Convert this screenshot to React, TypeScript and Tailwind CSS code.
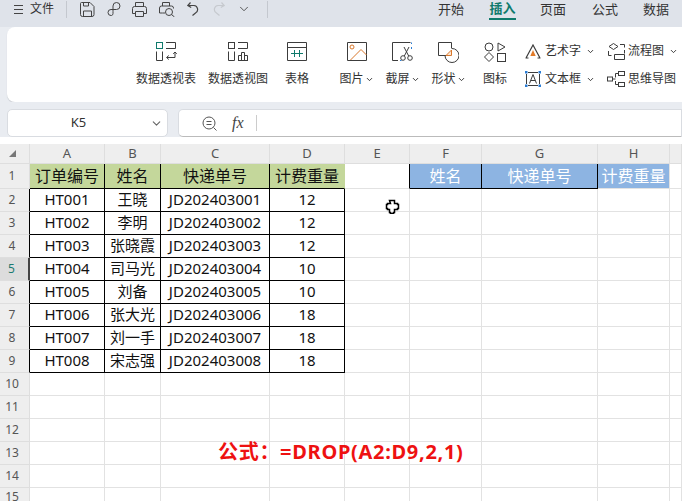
import { ChevronDown } from "lucide-react";

const COLS = ["A", "B", "C", "D", "E", "F", "G", "H", ""];

const ORDERS = [
  ["HT001", "王晓", "JD202403001", "12"],
  ["HT002", "李明", "JD202403002", "12"],
  ["HT003", "张晓霞", "JD202403003", "12"],
  ["HT004", "司马光", "JD202403004", "10"],
  ["HT005", "刘备", "JD202403005", "10"],
  ["HT006", "张大光", "JD202403006", "18"],
  ["HT007", "刘一手", "JD202403007", "18"],
  ["HT008", "宋志强", "JD202403008", "18"],
];

const RowHead = ({ n, edge }: { n: number; edge?: boolean }) => {
  const active = n === 5;
  return (
    <div
      className={`flex items-center justify-center pr-[5px] text-[12px] border-b border-b-[#dedede] ${
        active ? "bg-[#dcdcdc] text-[#1b7a70] border-r-2 border-r-[#444444]" : "bg-[#eeeeee] text-[#555555] border-r"
      } ${!active && edge ? "border-r-black" : ""} ${!active && !edge ? "border-r-[#dedede]" : ""}`}
    >
      {n}
    </div>
  );
};

const Cell = ({ className, children }: { className?: string; children?: React.ReactNode }) => (
  <div className={`flex items-center justify-center whitespace-nowrap border-r border-b ${className ?? "border-[#e2e2e2]"}`}>
    {children}
  </div>
);

const IconPivot = ({ chart }: { chart?: boolean }) => (
  <svg width="21" height="19" viewBox="0 0 21 19" fill="none" stroke="#3c3c3c">
    <rect x="0.5" y="0.5" width="6" height="6" stroke={chart ? "#3c3c3c" : "#0f7a6c"} />
    <path d="M10 .5h9.500v6H10M.5 9.500v9h6v-9" />
    {chart ? (
      <path d="M10.500 18.500v-5h3v5M13.500 18.500v-8h3v8M16.500 18.500v-5h3v5M10 18.500h10" />
    ) : (
      <path d="M19 14v-3.500M17.200 11.800 19 10l1.800 1.800M19 14v1.500h-8M12.800 13.500 10.500 15.500l2.300 2" />
    )}
  </svg>
);

const IconTable = () => (
  <svg width="20" height="19" viewBox="0 0 20 19" fill="none">
    <path d="M.5.500h19v18H.5zM.5 5.500h19" stroke="#3c3c3c" />
    <path d="M4 11.500h12M7.500 8v7M12.500 8v7" stroke="#0f7a6c" />
  </svg>
);

const IconPicture = () => (
  <svg width="20" height="19" viewBox="0 0 20 19" fill="none">
    <path d="M.5.500h19v18H.5z" stroke="#3c3c3c" />
    <circle cx="5" cy="5" r="2" stroke="#d9772b" />
    <path d="M3.500 18 14 7.500l5.500 5.500" stroke="#d9772b" />
  </svg>
);

const IconScreenshot = () => (
  <svg width="21" height="19" viewBox="0 0 21 19" fill="none">
    <path d="M6 18.500H.5V.500h18" stroke="#3c3c3c" />
    <path d="M19.500.500v1.500M19.500 5v2M8 18.500h1.500" stroke="#2b7cd3" />
    <circle cx="11" cy="16" r="2.300" stroke="#3c3c3c" />
    <circle cx="18" cy="16" r="2.300" stroke="#3c3c3c" />
    <path d="M12.300 14 17 5M16.700 14 12 5" stroke="#3c3c3c" />
  </svg>
);

const IconShape = () => (
  <svg width="21" height="21" viewBox="0 0 21 21" fill="none">
    <path d="M9 13.500H.5V.500h13v6" stroke="#3c3c3c" />
    <path d="M14 6.500a7 7 0 1 1-7 7" stroke="#3c3c3c" />
    <path d="M13.500 13.500h-5.500l5.500-5.500z" stroke="#d9772b" fill="#fbe6d2" />
  </svg>
);

const IconGallery = () => (
  <svg width="22" height="20" viewBox="0 0 22 20" fill="none" stroke="#3c3c3c">
    <circle cx="5" cy="5" r="4" />
    <path d="M14 1v8l7-4z" />
    <path d="M5 10.500 9.500 15 5 19.500.5 15z" />
    <rect x="13.500" y="11.500" width="8" height="8" />
  </svg>
);

const IconArt = () => (
  <svg width="16" height="15" viewBox="0 0 16 15" fill="none">
    <path d="M1 14 8 1l7 13M3.500 14h-3M15.500 14h-3" stroke="#3c3c3c" strokeWidth="1.200" />
    <path d="M8 6l2.700 6H5.300z" fill="#e27b2a" />
  </svg>
);

const IconTextBox = () => (
  <svg width="16" height="16" viewBox="0 0 16 16" fill="none">
    <path d="M1.500 3v10M14.500 3v10M3 1.500h10M3 14.500h10" stroke="#3c3c3c" />
    <path d="M4.500 12.500 8 3.500l3.500 9M5.800 9.500h4.400" stroke="#3c3c3c" />
    <path d="M0 0h2.500v2.500H0zM13.500 0H16v2.500h-2.500zM0 13.500h2.500V16H0zM13.500 13.500H16V16h-2.500z" fill="#2b7cd3" />
  </svg>
);

const IconFlow = () => (
  <svg width="18" height="17" viewBox="0 0 18 17" fill="none" stroke="#3c3c3c">
    <path d="M6.500.500 11 3.500 6.500 6.500 2 3.500z" />
    <path d="M13 1.500h4.500v3M17.500 7v3.500M1.500 8v4.500h3M7.500 11.500h10v5h-10z" />
  </svg>
);

const IconMind = () => (
  <svg width="18" height="16" viewBox="0 0 18 16" fill="none" stroke="#3c3c3c">
    <rect x="11.500" y="0.500" width="6" height="4" />
    <rect x="11.500" y="11.500" width="6" height="4" />
    <rect x="0.500" y="6" width="5" height="4" />
    <path d="M5.500 8H8.500M8.500 2.500h3M8.500 13.500h3M8.500 2.500v4M8.500 10v3.500" />
  </svg>
);

const QuickIcons = () => (
  <div className="flex items-center">
    <svg className="ml-[13px]" width="15" height="15" viewBox="0 0 15 15" fill="none" stroke="#444444">
      <path d="M1.500.500h8.500l4 4v8a2 2 0 0 1-2 2H2.500a2 2 0 0 1-2-2v-11a1 1 0 0 1 1-1zM3.500.500v3.500h5V.500M3.500 14.500V9h8v5.500" />
    </svg>
    <svg className="ml-[12px]" width="14" height="15" viewBox="0 0 14 15" fill="none" stroke="#444444">
      <path d="M6 9.500V4a3.500 3.500 0 1 1 3.500 3.500H4a3 3 0 1 0 0 6h.500a2 2 0 0 0 1.500-2z" />
    </svg>
    <svg className="ml-[11px]" width="15" height="15" viewBox="0 0 15 15" fill="none" stroke="#444444">
      <path d="M3.500 4.500v-4h8v4M3.500 11.500H.5v-5a2 2 0 0 1 2-2h10a2 2 0 0 1 2 2v5h-3M3.500 9.500h8v5h-8z" />
    </svg>
    <svg className="ml-[12px]" width="16" height="15" viewBox="0 0 16 15" fill="none" stroke="#444444">
      <path d="M3.500 4V.500h7V4M3.500 11H.5V6a2 2 0 0 1 2-2h10a2 2 0 0 1 2 2v.500M6 11H3.500" />
      <circle cx="10" cy="10" r="3.500" />
      <path d="m12.500 12.500 3 2.500" />
    </svg>
    <svg className="ml-[12px]" width="12" height="14" viewBox="0 0 12 14" fill="none" stroke="#444444" strokeWidth="1.200">
      <path d="M3.500.500 .8 3.500l3.400 2M1 3.500h6a4 4 0 0 1 1.500 7.500L5.500 13.500" />
    </svg>
    <svg className="ml-[14px]" width="12" height="14" viewBox="0 0 12 14" fill="none" stroke="#c6c9ce" strokeWidth="1.200">
      <path d="M8.500.500l2.700 3-3.400 2M11 3.500H5a4 4 0 0 0-1.500 7.500l3 2.500" />
    </svg>
    <ChevronDown className="ml-[12px]" size={14} color="#444444" strokeWidth={1.500} />
  </div>
);

const BigItem = ({ width, label, icon, caret }: { width: string; label: string; icon: React.ReactNode; caret?: boolean }) => (
  <div className={`flex flex-col items-center ${width}`}>
    <div className="flex h-[21px] items-start">{icon}</div>
    <div className="mt-[7px] flex h-[18px] items-center text-[12px] whitespace-nowrap">
      {label}
      {caret && <ChevronDown className="ml-px" size={9} strokeWidth={2.500} />}
    </div>
  </div>
);

const SmallItem = ({ label, icon, iconWidth }: { label: string; icon: React.ReactNode; iconWidth: string }) => (
  <div className="flex h-[28px] items-center text-[12px] whitespace-nowrap">
    <div className={`flex justify-start ${iconWidth}`}>{icon}</div>
    {label}
    <ChevronDown className="ml-[5px]" size={9} strokeWidth={2.500} />
  </div>
);

export default function App() {
  return (
    <div className="h-[501px] w-[682px] overflow-hidden bg-white font-['Noto_Sans','Noto_Sans_CJK_SC',sans-serif] text-[#333333]">
      {/* title bar */}
      <div className="h-[27px] bg-[#dfe3ea]">
        <div className="flex h-[18px] items-center">
          <div className="ml-[14px] flex h-[9px] w-[9px] flex-col justify-between">
            <div className="h-px bg-[#444444]" />
            <div className="h-px bg-[#444444]" />
            <div className="h-px bg-[#444444]" />
          </div>
          <div className="ml-[7px] text-[12px]">文件</div>
          <div className="ml-[12px] h-[17px] w-px bg-[#c4c8cf]" />
          <QuickIcons />
          <div className="ml-[16px] h-[17px] w-px bg-[#c4c8cf]" />
          <div className="ml-[170px] flex text-[13px] leading-[18px]">
            <div className="flex h-[22px] w-[26px] items-center justify-center whitespace-nowrap">开始</div>
            <div className="ml-[25px] flex h-[22px] w-[27px] items-center justify-center whitespace-nowrap border-b-2 border-b-[#0f7a6c] font-bold text-[#0f7a6c]">
              插入
            </div>
            <div className="ml-[24px] flex h-[22px] w-[26px] items-center justify-center whitespace-nowrap">页面</div>
            <div className="ml-[26px] flex h-[22px] w-[26px] items-center justify-center whitespace-nowrap">公式</div>
            <div className="ml-[25px] flex h-[22px] w-[26px] items-center justify-center whitespace-nowrap">数据</div>
          </div>
        </div>
      </div>

      {/* ribbon */}
      <div className="bg-[#e9ecf1] pl-[7px]">
        <div className="flex h-[75px] items-start rounded-l-[8px] bg-white pl-[123px] shadow-[0_1px_1px_#c9ccd2]">
          <div className="flex pt-[15px]">
            <BigItem width="w-[72px]" label="数据透视表" icon={<IconPivot />} />
            <BigItem width="w-[72px]" label="数据透视图" icon={<IconPivot chart />} />
            <BigItem width="w-[46px]" label="表格" icon={<IconTable />} />
          </div>
          <div className="ml-[7px] mt-[5px] h-[66px] w-px bg-[#dddddd]" />
          <div className="ml-[13px] flex pt-[15px]">
            <BigItem width="w-[33px]" label="图片" icon={<IconPicture />} caret />
            <BigItem width="w-[33px] ml-[13px]" label="截屏" icon={<IconScreenshot />} caret />
            <BigItem width="w-[33px] ml-[13px]" label="形状" icon={<IconShape />} caret />
            <BigItem width="w-[26px] ml-[17px]" label="图标" icon={<IconGallery />} />
          </div>
          <div className="ml-[17px] flex flex-col pt-[10px]">
            <SmallItem label="艺术字" icon={<IconArt />} iconWidth="w-[20px]" />
            <SmallItem label="文本框" icon={<IconTextBox />} iconWidth="w-[20px]" />
          </div>
          <div className="ml-[12px] flex flex-col pt-[10px]">
            <SmallItem label="流程图" icon={<IconFlow />} iconWidth="w-[21px]" />
            <SmallItem label="思维导图" icon={<IconMind />} iconWidth="w-[21px]" />
          </div>
        </div>
      </div>

      {/* formula bar */}
      <div className="flex h-[35px] items-end gap-[10px] bg-[#e9ecf1] pl-[7px]">
        <div className="relative flex h-[28px] w-[161px] items-center justify-center rounded-[5px] border border-[#d9dce1] bg-white pr-[18px] text-[13px]">
          K5
          <ChevronDown className="absolute right-[4px]" size={13} color="#666666" />
        </div>
        <div className="flex h-[28px] flex-1 items-center rounded-l-[5px] border border-[#d9dce1] border-b-[#bbbbbb] bg-white">
          <svg className="ml-[23px]" width="16" height="15" viewBox="0 0 16 15" fill="none" stroke="#555555">
            <circle cx="7" cy="7" r="6" />
            <path d="M4.500 5.500h5M4.500 8.500h5M11.500 11.500l3 3" />
          </svg>
          <div className="ml-[14px] font-['Liberation_Serif',serif] text-[16px] italic text-[#444444]">fx</div>
          <div className="ml-[12px] h-[16px] w-px bg-[#cccccc]" />
        </div>
      </div>

      {/* sheet */}
      <div className="relative pt-[7px]">
        <div className="grid grid-cols-[30px_75px_56px_109px_75px_65px_72px_116px_72px_1fr] grid-rows-[20px_25px_repeat(13,23px)] text-[15px] text-[#111111]">
          <div className="flex items-center justify-center border-r border-b border-[#dedede] bg-[#eeeeee]">
            <div className="ml-[-4px] h-0 w-0 border-b-[7px] border-l-[7px] border-b-[#777777] border-l-transparent" />
          </div>
          {COLS.map((c) => (
            <div key={c} className="flex items-center justify-center border-r border-b border-[#dedede] bg-[#eeeeee] text-[13px] text-[#555555]">
              {c}
            </div>
          ))}

          <RowHead n={1} />
          <Cell className="border-black bg-[#c4d79b] text-[16px]">订单编号</Cell>
          <Cell className="border-black bg-[#c4d79b] text-[16px]">姓名</Cell>
          <Cell className="border-black bg-[#c4d79b] text-[16px]">快递单号</Cell>
          <Cell className="border-r-[#c4d79b] border-b-black bg-[#c4d79b] text-[16px]">计费重量</Cell>
          <Cell className="border-r-black border-b-[#e2e2e2]" />
          <Cell className="border-black bg-[#8db4e2] text-[16px] text-white">姓名</Cell>
          <Cell className="border-black bg-[#8db4e2] text-[16px] text-white">快递单号</Cell>
          <Cell className="border-r-[#e2e2e2] border-b-[#e2e2e2] bg-[#8db4e2] text-[16px] text-white">计费重量</Cell>
          <Cell />

          {ORDERS.map((row, i) => (
            <div key={row[0]} className="contents">
              <RowHead n={i + 2} edge />
              {row.map((v, j) => (
                <Cell key={j} className="border-black pb-[2px]">
                  {v}
                </Cell>
              ))}
              <Cell />
              <Cell />
              <Cell />
              <Cell />
              <Cell />
            </div>
          ))}

          {[10, 11, 12, 13, 14, 15].map((n) => (
            <div key={n} className="contents">
              <RowHead n={n} />
              <Cell />
              <Cell />
              {n === 13 ? (
                <Cell className="relative z-10 justify-start border-[#e2e2e2] pb-[2px] pl-[57px] text-[20px] font-bold tracking-[0.7px] text-[#ee1111]">
                  公式：=DROP(A2:D9,2,1)
                </Cell>
              ) : (
                <Cell />
              )}
              <Cell />
              <Cell />
              <Cell />
              <Cell />
              <Cell />
              <Cell />
            </div>
          ))}
        </div>

        {/* mouse pointer */}
        <svg className="absolute left-[385px] top-[62px]" width="15" height="15" viewBox="0 0 15 15">
          <path
            d="M4.500 1.500h5v3h3v1h1v4h-1v1h-3v3h-1v1h-3v-1h-1v-3h-2v-1h-1v-4h1v-1h3z"
            fill="#ffffff"
            stroke="#000000"
            strokeWidth="1.500"
          />
        </svg>
      </div>
    </div>
  );
}
